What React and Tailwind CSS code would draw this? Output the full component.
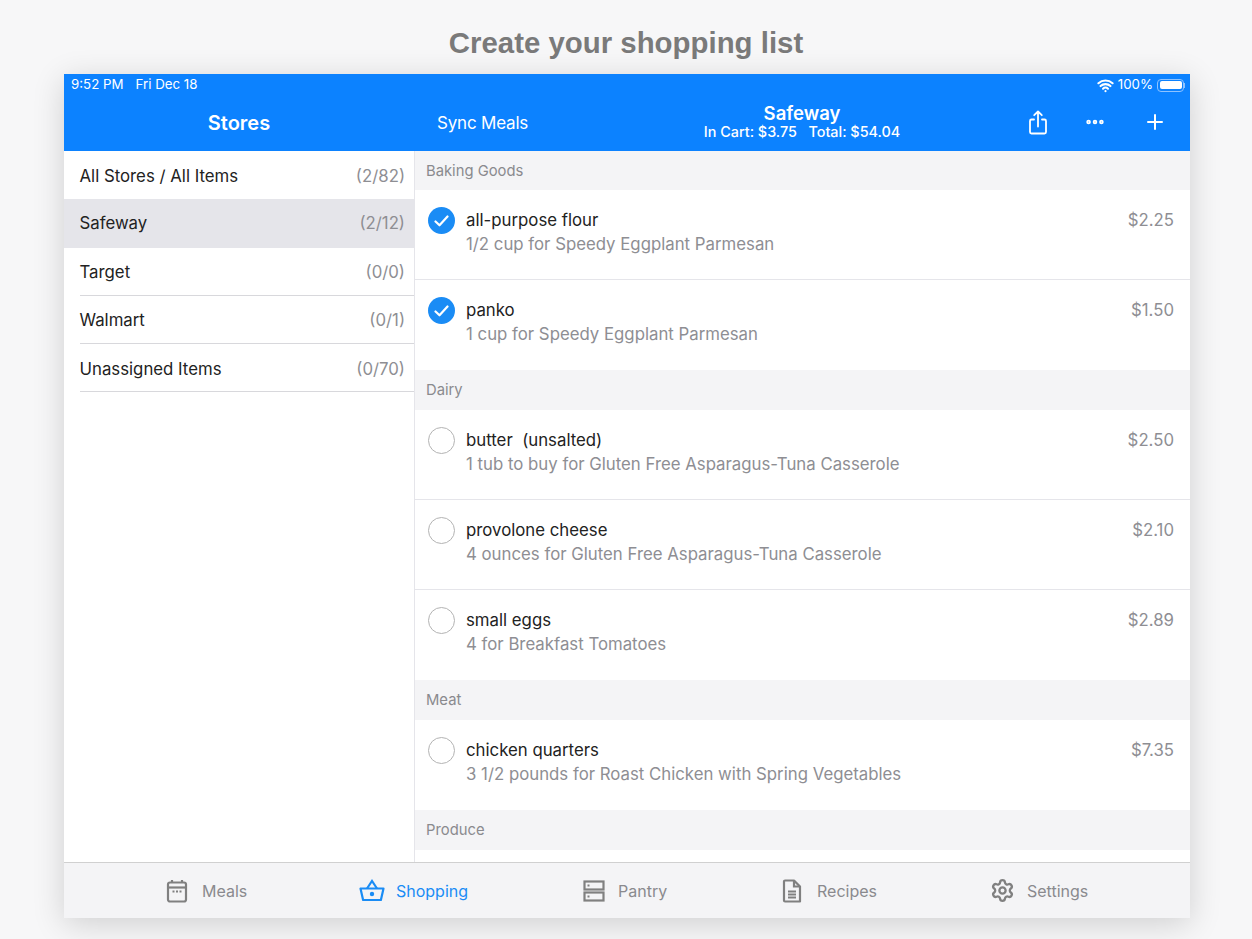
import React from 'react'
import { Ellipsis, Plus, Settings, Wifi } from 'lucide-react'

const stores = [
  { name: 'All Stores / All Items', count: '(2/82)', noLine: true },
  { name: 'Safeway', count: '(2/12)', active: true },
  { name: 'Target', count: '(0/0)' },
  { name: 'Walmart', count: '(0/1)' },
  { name: 'Unassigned Items', count: '(0/70)' },
]

const sections = [
  {
    title: 'Baking Goods',
    first: true,
    items: [
      { name: 'all-purpose flour', note: '1/2 cup for Speedy Eggplant Parmesan', price: '$2.25', done: true },
      { name: 'panko', note: '1 cup for Speedy Eggplant Parmesan', price: '$1.50', done: true },
    ],
  },
  {
    title: 'Dairy',
    items: [
      { name: 'butter  (unsalted)', note: '1 tub to buy for Gluten Free Asparagus-Tuna Casserole', price: '$2.50' },
      { name: 'provolone cheese', note: '4 ounces for Gluten Free Asparagus-Tuna Casserole', price: '$2.10' },
      { name: 'small eggs', note: '4 for Breakfast Tomatoes', price: '$2.89' },
    ],
  },
  {
    title: 'Meat',
    items: [
      { name: 'chicken quarters', note: '3 1/2 pounds for Roast Chicken with Spring Vegetables', price: '$7.35' },
    ],
  },
  { title: 'Produce', items: [] },
]

function ShareIcon() {
  return (
    <svg width="20" height="25" viewBox="0 0 20 25" fill="none" stroke="white" strokeWidth="1.8" strokeLinecap="round" strokeLinejoin="round">
      <path d="M6 9.5H3.5A1.5 1.5 0 0 0 2 11v11a1.5 1.5 0 0 0 1.5 1.5h13A1.5 1.5 0 0 0 18 22V11a1.5 1.5 0 0 0-1.5-1.5H14" />
      <path d="M10 16.5V1.5M6.2 5.2L10 1.5l3.8 3.7" />
    </svg>
  )
}

function CalendarIcon() {
  return (
    <svg width="22" height="24" viewBox="0 0 22 24" fill="none" stroke="#808080" strokeWidth="2.2">
      <rect x="2" y="3.5" width="18" height="19" rx="2" />
      <path d="M2 8.5h18" />
      <path d="M6 1v3M16 1v3" />
      <path d="M6.5 12.5h2M10 12.5h2M13.5 12.5h2" strokeWidth="1.8" />
    </svg>
  )
}

function BasketIcon() {
  return (
    <svg width="26" height="24" viewBox="0 0 26 24" fill="none" stroke="#1a8cf5" strokeWidth="2.2">
      <path d="M1.5 9.5h23l-2.6 11.5H4.1z" strokeLinejoin="round" />
      <path d="M8 9.5l5-7.5 5 7.5" />
      <circle cx="13" cy="15" r="2.2" fill="#1a8cf5" stroke="none" />
    </svg>
  )
}

function PantryIcon() {
  return (
    <svg width="22" height="22" viewBox="0 0 22 22" fill="none" stroke="#808080" strokeWidth="2.2">
      <rect x="1.5" y="1.5" width="19" height="8" />
      <rect x="1.5" y="12.5" width="19" height="8" />
      <path d="M4.5 5.5h2M4.5 16.5h2" />
    </svg>
  )
}

function RecipeIcon() {
  return (
    <svg width="20" height="24" viewBox="0 0 20 24" fill="none" stroke="#808080" strokeWidth="2.2">
      <path d="M3 1.5h9l6 6v15H3a1 1 0 0 1-1-1v-19a1 1 0 0 1 1-1z" strokeLinejoin="round" />
      <path d="M12 1.5v6h6" />
      <path d="M6 12.5h8M6 15.5h8M6 18.5h8" strokeWidth="1.8" />
    </svg>
  )
}

function Tab({ icon, label, active, className }) {
  return (
    <div className={`flex items-center ${className}`}>
      {icon}
      <span className={active ? 'text-[16px] text-[#1a8cf5]' : 'text-[16px] text-[#8a8a8e]'}>{label}</span>
    </div>
  )
}

function ItemRow({ item }) {
  return (
    <div className="h-[90px] bg-white flex pl-[13px]">
      {item.done ? (
        <div className="mt-[17px] w-[27px] h-[27px] rounded-full bg-[#1a8cf5] flex items-center justify-center shrink-0">
          <svg width="15" height="12" viewBox="0 0 15 12" fill="none" stroke="white" strokeWidth="2.2" strokeLinecap="round" strokeLinejoin="round">
            <path d="M1.5 6.5l4 3.8 8-8.8" />
          </svg>
        </div>
      ) : (
        <div className="mt-[17px] w-[27px] h-[27px] rounded-full border border-[#b3b3b3] shrink-0" />
      )}
      <div className="ml-[11px] flex-1 flex pr-4">
        <div className="flex-1 pt-[17px]">
          <div className="text-[16.8px] leading-[26px] text-[#222] whitespace-pre">{item.name}</div>
          <div className="text-[16.8px] leading-[22px] text-[#8e8e93]">{item.note}</div>
        </div>
        <div className="pt-[17px] text-[16.8px] leading-[26px] text-[#8e8e93]">{item.price}</div>
      </div>
    </div>
  )
}

export default function App() {
  return (
    <div className="w-[1252px] h-[939px] overflow-hidden bg-[#f7f7f8] flex flex-col items-center font-['Inter','Liberation_Sans',sans-serif]">
      <h1 className="h-[74px] pt-[24px] text-[29.4px] leading-[38px] font-bold text-[#7a7a7a] font-['Liberation_Sans',Arial,sans-serif]">
        Create your shopping list
      </h1>

      <div className="ml-[2px] w-[1126px] h-[844px] flex flex-col bg-white shadow-[0_6px_30px_rgba(0,0,0,0.16)]">
        {/* blue header */}
        <div className="h-[77px] bg-[#0c82ff] text-white shrink-0">
          <div className="h-[22px] flex items-center justify-between pl-[7px] pr-[5px] text-[13.3px]">
            <div className="flex gap-[12px]">
              <span>9:52 PM</span>
              <span>Fri Dec 18</span>
            </div>
            <div className="flex items-center">
              <Wifi size={17} strokeWidth={3} className="mr-[4px]" />
              <span>100%</span>
              <div className="ml-[4px] w-[27px] h-[13px] rounded-[4px] border border-[#8fc3ff] p-[1.5px]">
                <div className="w-full h-full rounded-[2px] bg-white" />
              </div>
              <div className="w-[1px] h-[5px] bg-[#8fc3ff]" />
            </div>
          </div>
          <div className="h-[55px] flex items-center">
            <div className="w-[350px] pb-[2px] text-center text-[20px] font-semibold">Stores</div>
            <div className="w-[213px] pl-[23px] text-[17px] tracking-[-0.2px]">Sync Meals</div>
            <div className="w-[350px] pb-[4px] text-center">
              <div className="text-[18.5px] leading-[20px] font-semibold">Safeway</div>
              <div className="text-[14.4px] leading-[18px] font-medium whitespace-pre">In Cart: $3.75   Total: $54.04</div>
            </div>
            <div className="flex-1 flex items-center pb-[3px]">
              <div className="ml-[51px]">
                <ShareIcon />
              </div>
              <Ellipsis size={22} strokeWidth={3} className="ml-[36px]" />
              <Plus size={24} strokeWidth={2} className="ml-[37px]" />
            </div>
          </div>
        </div>

        <div className="flex-1 flex min-h-0">
          {/* stores column */}
          <div className="w-[351px] shrink-0 border-r border-[#e5e5ea]">
            {stores.map((s) => (
              <div key={s.name} className={`h-[48.3px] pl-[15.5px] ${s.active ? 'bg-[#e5e5ea]' : ''}`}>
                <div className={`h-full flex items-center justify-between pr-[9px] ${s.active ? 'pt-[1px]' : 'pt-[3px]'} ${s.active || s.noLine ? '' : 'border-b border-[#d8d8dc]'}`}>
                  <span className="text-[16.8px] text-[#222]">{s.name}</span>
                  <span className="text-[16.8px] text-[#8e8e93]">{s.count}</span>
                </div>
              </div>
            ))}
          </div>

          {/* items column */}
          <div className="flex-1 overflow-hidden bg-white">
            {sections.map((sec) => (
              <div key={sec.title}>
                <div className={`${sec.first ? 'h-[39px] pt-[1px]' : 'h-[40px]'} bg-[#f4f4f6] pl-[11px] flex items-center text-[14.8px] text-[#8a8a8e]`}>
                  {sec.title}
                </div>
                <div className="divide-y divide-[#e5e5ea]">
                  {sec.items.map((item) => (
                    <ItemRow key={item.name} item={item} />
                  ))}
                </div>
              </div>
            ))}
          </div>
        </div>

        {/* tab bar */}
        <div className="h-[56px] shrink-0 bg-[#f4f4f6] border-t border-[#d0d0d0] flex items-center">
          <Tab icon={<CalendarIcon />} label="Meals" className="ml-[102px] w-[193px] gap-[14px]" />
          <Tab icon={<BasketIcon />} label="Shopping" active className="w-[224px] gap-[11px]" />
          <Tab icon={<PantryIcon />} label="Pantry" className="w-[199px] gap-[13px]" />
          <Tab icon={<RecipeIcon />} label="Recipes" className="w-[208px] gap-[15px]" />
          <Tab icon={<Settings size={25} strokeWidth={2.2} color="#808080" />} label="Settings" className="gap-[12px]" />
        </div>
      </div>
    </div>
  )
}
